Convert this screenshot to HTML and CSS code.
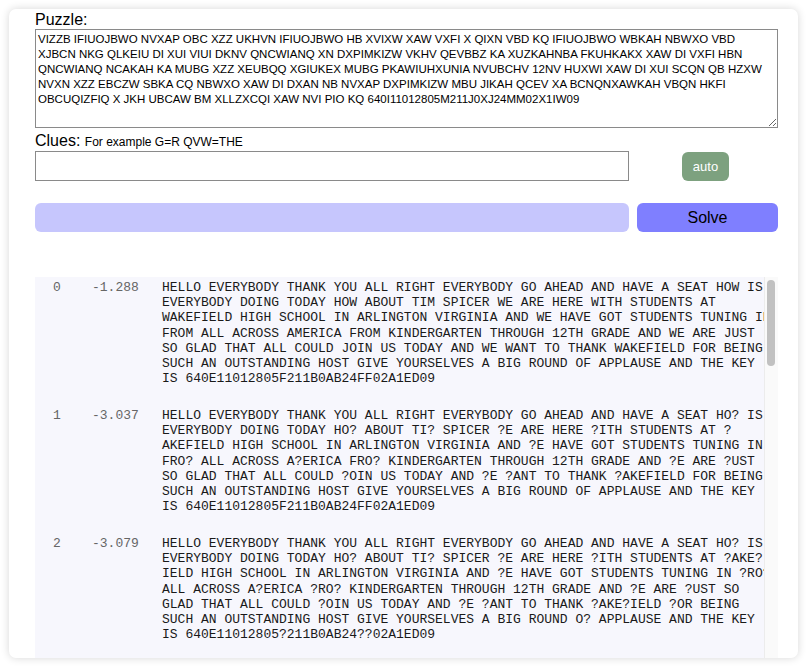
FILE: index.html
```html
<!DOCTYPE html>
<html lang="en">
<head>
<meta charset="utf-8">
<title>Cryptogram Solver</title>
<link rel="stylesheet" href="styles.css">
</head>
<body>
<main class="card">
  <div class="label">Puzzle:</div>
  <textarea class="puzzle">VIZZB IFIUOJBWO NVXAP OBC XZZ UKHVN IFIUOJBWO HB XVIXW XAW VXFI X QIXN VBD KQ IFIUOJBWO WBKAH NBWXO VBD XJBCN NKG QLKEIU DI XUI VIUI DKNV QNCWIANQ XN DXPIMKIZW VKHV QEVBBZ KA XUZKAHNBA FKUHKAKX XAW DI VXFI HBN QNCWIANQ NCAKAH KA MUBG XZZ XEUBQQ XGIUKEX MUBG PKAWIUHXUNIA NVUBCHV 12NV HUXWI XAW DI XUI SCQN QB HZXW NVXN XZZ EBCZW SBKA CQ NBWXO XAW DI DXAN NB NVXAP DXPIMKIZW MBU JIKAH QCEV XA BCNQNXAWKAH VBQN HKFI OBCUQIZFIQ X JKH UBCAW BM XLLZXCQI XAW NVI PIO KQ 640I11012805M211J0XJ24MM02X1IW09</textarea>
  <div class="label clues-label">Clues: <span class="hint">For example G=R QVW=THE</span></div>
  <div class="controls">
    <input class="clues" type="text">
    <button class="auto" type="button">auto</button>
    <div class="progress"></div>
    <button class="solve" type="button">Solve</button>
  </div>
  <div class="results">
    <div class="list">
      <div class="row"><span class="idx">0</span><span class="score">-1.288</span><span class="text">HELLO EVERYBODY THANK YOU ALL RIGHT EVERYBODY GO AHEAD AND HAVE A SEAT HOW IS EVERYBODY DOING TODAY HOW ABOUT TIM SPICER WE ARE HERE WITH STUDENTS AT WAKEFIELD HIGH SCHOOL IN ARLINGTON VIRGINIA AND WE HAVE GOT STUDENTS TUNING IN FROM ALL ACROSS AMERICA FROM KINDERGARTEN THROUGH 12TH GRADE AND WE ARE JUST SO GLAD THAT ALL COULD JOIN US TODAY AND WE WANT TO THANK WAKEFIELD FOR BEING SUCH AN OUTSTANDING HOST GIVE YOURSELVES A BIG ROUND OF APPLAUSE AND THE KEY IS 640E11012805F211B0AB24FF02A1ED09</span></div>
      <div class="row"><span class="idx">1</span><span class="score">-3.037</span><span class="text">HELLO EVERYBODY THANK YOU ALL RIGHT EVERYBODY GO AHEAD AND HAVE A SEAT HO? IS EVERYBODY DOING TODAY HO? ABOUT TI? SPICER ?E ARE HERE ?ITH STUDENTS AT ?AKEFIELD HIGH SCHOOL IN ARLINGTON VIRGINIA AND ?E HAVE GOT STUDENTS TUNING IN FRO? ALL ACROSS A?ERICA FRO? KINDERGARTEN THROUGH 12TH GRADE AND ?E ARE ?UST SO GLAD THAT ALL COULD ?OIN US TODAY AND ?E ?ANT TO THANK ?AKEFIELD FOR BEING SUCH AN OUTSTANDING HOST GIVE YOURSELVES A BIG ROUND OF APPLAUSE AND THE KEY IS 640E11012805F211B0AB24FF02A1ED09</span></div>
      <div class="row"><span class="idx">2</span><span class="score">-3.079</span><span class="text">HELLO EVERYBODY THANK YOU ALL RIGHT EVERYBODY GO AHEAD AND HAVE A SEAT HO? IS EVERYBODY DOING TODAY HO? ABOUT TI? SPICER ?E ARE HERE ?ITH STUDENTS AT ?AKE?IELD HIGH SCHOOL IN ARLINGTON VIRGINIA AND ?E HAVE GOT STUDENTS TUNING IN ?RO? ALL ACROSS A?ERICA ?RO? KINDERGARTEN THROUGH 12TH GRADE AND ?E ARE ?UST SO GLAD THAT ALL COULD ?OIN US TODAY AND ?E ?ANT TO THANK ?AKE?IELD ?OR BEING SUCH AN OUTSTANDING HOST GIVE YOURSELVES A BIG ROUND O? APPLAUSE AND THE KEY IS 640E11012805?211B0AB24??02A1ED09</span></div>
    </div>
    <div class="scrollbar"><div class="thumb"></div></div>
  </div>
</main>
</body>
</html>
```

FILE: styles.css
```css
* { box-sizing: border-box; }

html, body {
  margin: 0;
  padding: 0;
  background: #ffffff;
}

body {
  padding: 9px;
  font-family: "Liberation Sans", Arial, sans-serif;
  color: #000;
}

.card {
  height: calc(100vh - 18px);
  display: flex;
  flex-direction: column;
  padding: 1px 20px 0 26px;
  background: #fff;
  border-radius: 7px;
  box-shadow: 0 0 8px rgba(0, 0, 0, 0.16);
  overflow: hidden;
}

.label {
  font-size: 16px;
  line-height: 19px;
  height: 19px;
}

.clues-label {
  margin-top: 3px;
  margin-bottom: 1px;
}

.hint {
  font-size: 12px;
}

.puzzle {
  display: block;
  width: 100%;
  height: 99px;
  margin: 0;
  padding: 2px 2px;
  border: 1px solid #8a8a8a;
  font-family: "Liberation Sans", Arial, sans-serif;
  font-size: 11.5px;
  line-height: 15px;
  color: #000;
  resize: vertical;
  flex: none;
}

.controls {
  display: grid;
  grid-template-columns: 1fr 141px;
  column-gap: 8px;
  row-gap: 22px;
  flex: none;
}

.clues {
  height: 30px;
  margin: 0;
  border: 1px solid #8a8a8a;
  font: 13px "Liberation Sans", Arial, sans-serif;
  padding: 2px 4px;
}

.auto {
  justify-self: center;
  align-self: start;
  margin: 1px 4px 0 0;
  width: 47px;
  height: 29px;
  border: none;
  border-radius: 6px;
  background: #7da17f;
  color: #fff;
  font: 13px "Liberation Sans", Arial, sans-serif;
  padding: 0;
}

.progress {
  height: 29px;
  border-radius: 6px;
  background: #c6c6fd;
}

.solve {
  height: 29px;
  border: none;
  border-radius: 6px;
  background: #7f7fff;
  color: #000;
  font: 16px "Liberation Sans", Arial, sans-serif;
  padding: 0;
}

.results {
  flex: 1;
  min-height: 0;
  margin-top: 45px;
  display: flex;
  background: #f7f7fd;
  font-family: "Liberation Mono", "Courier New", monospace;
  font-size: 13px;
  line-height: 15.2px;
}

.list {
  flex: 1;
  min-width: 0;
  overflow: hidden;
  padding-top: 3px;
}

.scrollbar {
  flex: none;
  width: 14px;
  padding: 3px 3px 0 2px;
  background: #fafafa;
  border-left: 1px solid #ececec;
}

.thumb {
  height: 86px;
  border-radius: 4px;
  background: #c1c1c1;
}

.row {
  display: grid;
  grid-template-columns: 39px 70px 612px;
  padding-left: 18px;
  margin-bottom: 21.6px;
}

.idx, .score {
  color: #666;
}

.text {
  color: #1a1a1a;
}
```
